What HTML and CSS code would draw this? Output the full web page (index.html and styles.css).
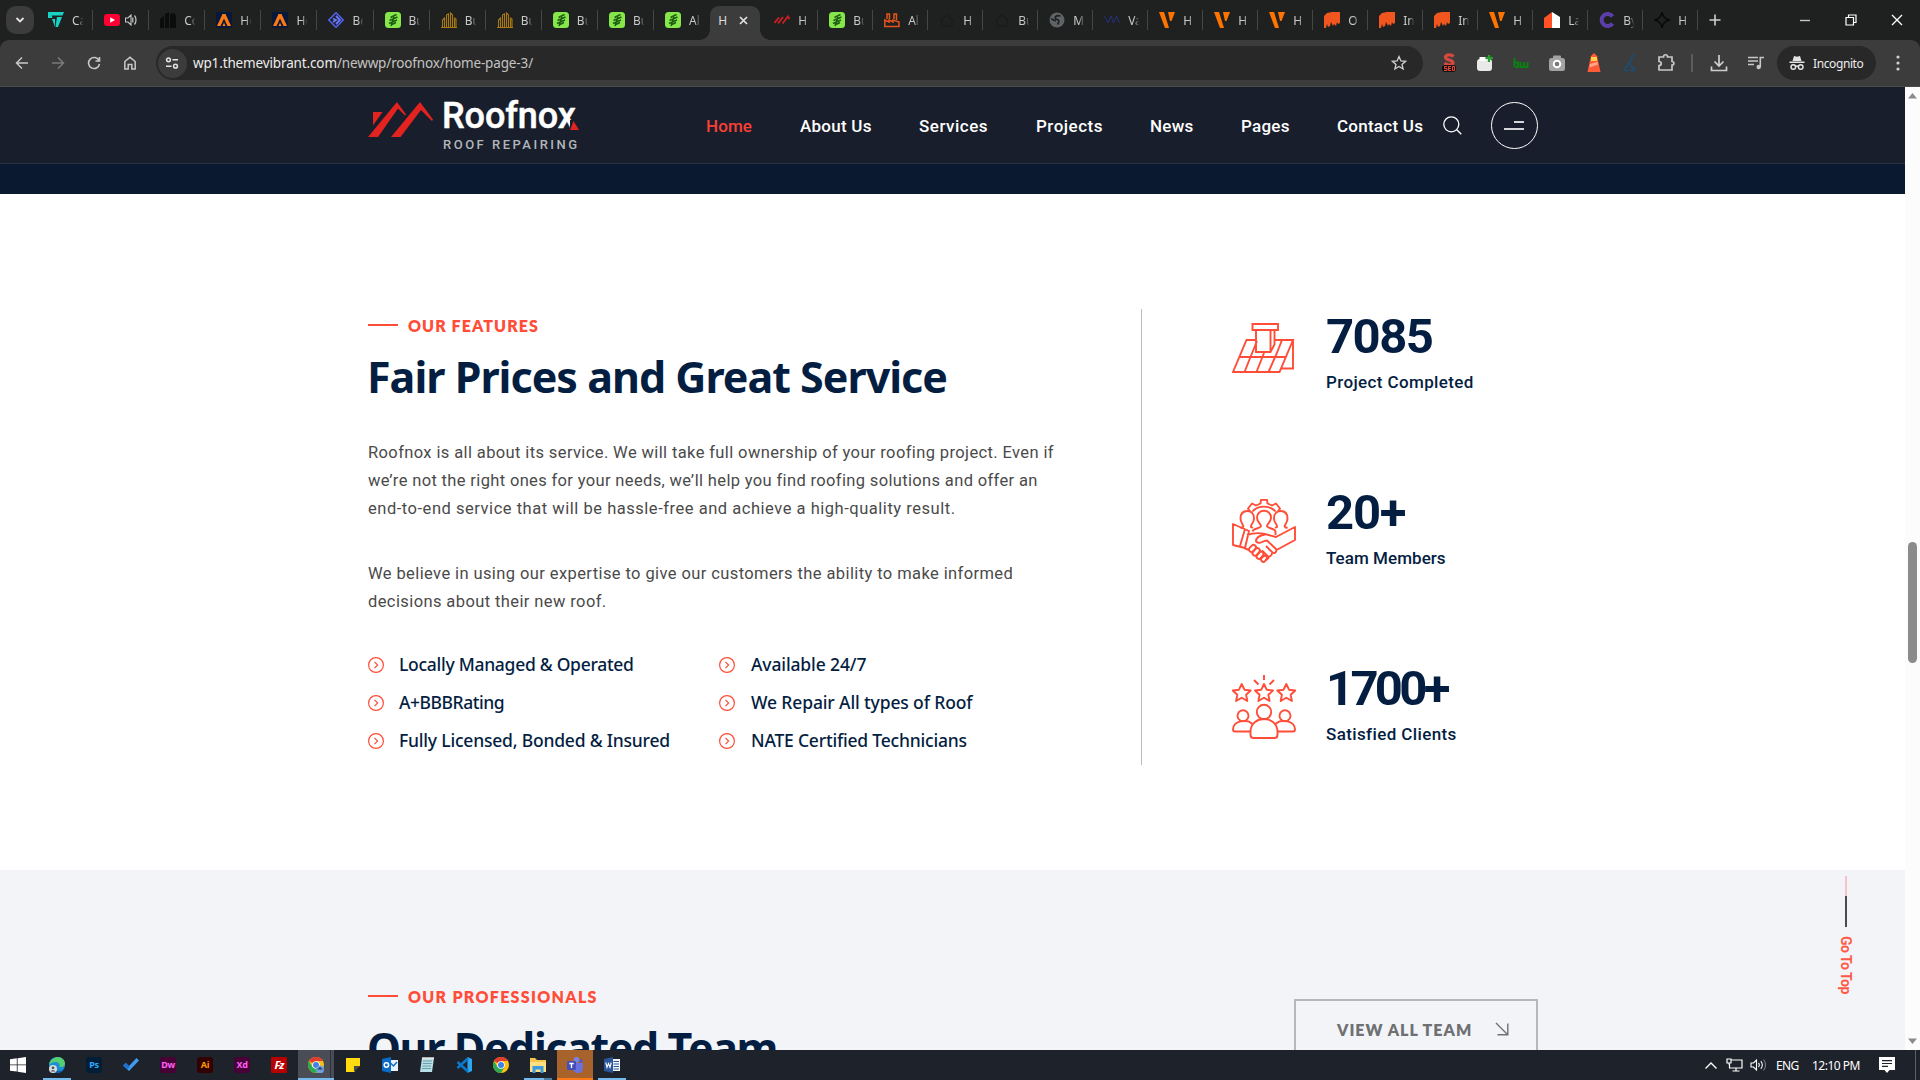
FILE: index.html
```html
<!DOCTYPE html>
<html lang="en">
<head>
<meta charset="utf-8">
<title>Roofnox – Home Page 3</title>
<link rel="stylesheet" href="styles.css">
</head>
<body>
<svg class="defs" width="0" height="0">
  <symbol id="f-teal" viewBox="0 0 16 16"><path d="M0 0h16l-1.500 3.500H3.500l1 2.500H0zM4 7h3v8zM9 5h5l-4 10H7.500z" fill="#16d3c5"/></symbol>
  <symbol id="f-yt" viewBox="0 0 16 16"><rect y="2" width="16" height="12" rx="3" fill="#ff0033"/><path d="M6.200 5.200v5.600L11 8z" fill="#fff"/></symbol>
  <symbol id="f-bld" viewBox="0 0 16 16"><path d="M0 16V7l4-3v12zM5 16V2l4-2v16zM10 16V2l4-1 2 3v12z" fill="#0b0c0c"/></symbol>
  <symbol id="f-a" viewBox="0 0 16 16"><rect width="16" height="16" fill="#07183a"/><path d="M1 14L6.500 2h3L15 14h-3.500L8 6.500 4.500 14zM6.500 14L8 10.500 9.500 14z" fill="#ff7a14"/></symbol>
  <symbol id="f-dia" viewBox="0 0 16 16"><path d="M8 .8L15.200 8 8 15.200.8 8z" fill="none" stroke="#4f62f5" stroke-width="1.600"/><path d="M8 4l4 4-4 4M5 6.500L8 8l-3 2" fill="none" stroke="#6b79ff" stroke-width="1.800"/></symbol>
  <symbol id="f-green" viewBox="0 0 16 16"><rect width="16" height="16" rx="3.500" fill="#86e64a"/><path d="M11.500 2.500L5.500 5.500M12.500 5L4.500 8.500M12 8L4 11.500M11 10.500L7 12.500M9 5l-3 9" fill="none" stroke="#1f5d14" stroke-width="1.500"/></symbol>
  <symbol id="f-gold" viewBox="0 0 16 16"><path d="M1.500 16V8l2-2v10M5.500 16V3l2-1v14M9.500 16V1l2 2v13M13.500 16V6l1.500 1v9M0 15.500h16" fill="none" stroke="#a97a12" stroke-width="1.100"/></symbol>
  <symbol id="f-roof" viewBox="0 0 16 16"><path d="M.5 11L5 5.500M4 11.500l5-6.500M8.500 11.500L14 4.500l1.500 2.500" fill="none" stroke="#c91f24" stroke-width="1.900"/></symbol>
  <symbol id="f-fac" viewBox="0 0 16 16"><path d="M.8 14.500V8L5 10V8l4 2V8l6 2v4.500zM3 7V2h2.500v5M10 7V2h2.500v6" fill="none" stroke="#e6531b" stroke-width="1.500"/></symbol>
  <symbol id="f-dark" viewBox="0 0 16 16"><path d="M1 9l7-6 7 6M3 8v6h10V8" fill="none" stroke="#1a1b1b" stroke-width="1.400"/></symbol>
  <symbol id="f-globe" viewBox="0 0 16 16"><circle cx="8" cy="8" r="7.500" fill="#5f6368"/><path d="M11.500 4C7 3 5 5 7 7c3 1 4 2 1.500 5.500M2 7c2 0 3 2 5 1.500" fill="none" stroke="#1f2120" stroke-width="1.700"/></symbol>
  <symbol id="f-va" viewBox="0 0 16 16"><path d="M.5 4L4 11l3-7 2.500 7 3-7L15.500 11" fill="none" stroke="#26307f" stroke-width="1"/></symbol>
  <symbol id="f-v" viewBox="0 0 16 16"><path d="M0 0h5l5 16H6zM9 0h7l-3.500 9H11z" fill="#ff7300"/></symbol>
  <symbol id="f-mat" viewBox="0 0 16 16"><path d="M0 16V4l3-3 5-1h8v11l-2 1-1-2-1 4-2-2-1 2-2-4-1 4-2 1-1-3-1 4z" fill="#f0561d"/></symbol>
  <symbol id="f-la" viewBox="0 0 16 16"><path d="M0 16V6l8-6v16z" fill="#ff5226"/><path d="M8 0l8 5v11H8z" fill="#fff"/></symbol>
  <symbol id="f-c" viewBox="0 0 16 16"><path d="M13.500 4.500A6 6 0 1 0 13.500 11.500" fill="none" stroke="#5b3fa8" stroke-width="4"/></symbol>
  <symbol id="f-star" viewBox="0 0 16 16"><path d="M8 .8c1.500 4.500 2.700 5.700 7.200 7.200-4.500 1.500-5.700 2.700-7.200 7.200C6.500 10.700 5.300 9.500.8 8 5.300 6.500 6.500 5.300 8 .8z" fill="none" stroke="#080808" stroke-width="1.500"/></symbol>
  <symbol id="check" viewBox="0 0 16 16"><circle cx="8" cy="8" r="7.400" fill="none" stroke="#ff4d38" stroke-width="1.200"/><path d="M6.500 4.800L9.600 8l-3.100 3.200" fill="none" stroke="#ff4d38" stroke-width="1.200"/></symbol>
  <symbol id="chromelogo" viewBox="0 0 16 16"><circle cx="8" cy="8" r="8" fill="#fbc116"/><path d="M8 8L1.070 4A8 8 0 0 1 14.930 4H8z" fill="#e33b2e"/><path d="M1.070 4A8 8 0 0 0 8 16l3.500-6L8 8 4.500 10z" fill="#2da94f"/><circle cx="8" cy="8" r="3.800" fill="#fff"/><circle cx="8" cy="8" r="3" fill="#3f80ea"/></symbol>
</svg>

<header class="tabstrip">
  <button class="tabsearch"><svg width="10" height="8" viewBox="0 0 10 8"><path d="M1.500 2L5 5.500 8.500 2" fill="none" stroke="#e3e3e3" stroke-width="1.800"/></svg></button>
  <div class="tabs tabs-left">
    <div class="tab"><svg><use href="#f-teal"/></svg><span>Ca</span></div>
    <div class="tab"><svg><use href="#f-yt"/></svg><svg class="sound" viewBox="0 0 12 12"><path d="M.5 4v4h2.500l3 3V1L3 4z" fill="none" stroke="#c8c8c8" stroke-width="1.100"/><path d="M7.800 3.500v5M9.500 1.500c2 2 2 7 0 9" fill="none" stroke="#c8c8c8" stroke-width="1.200"/></svg></div>
    <div class="tab"><svg><use href="#f-bld"/></svg><span>Co</span></div>
    <div class="tab"><svg><use href="#f-a"/></svg><span>Ho</span></div>
    <div class="tab"><svg><use href="#f-a"/></svg><span>Ho</span></div>
    <div class="tab"><svg><use href="#f-dia"/></svg><span>Be</span></div>
    <div class="tab"><svg><use href="#f-green"/></svg><span>Bu</span></div>
    <div class="tab"><svg><use href="#f-gold"/></svg><span>Bu</span></div>
    <div class="tab"><svg><use href="#f-gold"/></svg><span>Bu</span></div>
    <div class="tab"><svg><use href="#f-green"/></svg><span>Bu</span></div>
    <div class="tab"><svg><use href="#f-green"/></svg><span>Bu</span></div>
    <div class="tab last"><svg><use href="#f-green"/></svg><span>Al</span></div>
  </div>
  <div class="tab-active"><span>H</span><svg width="9" height="9" viewBox="0 0 9 9"><path d="M1 1l7 7M8 1L1 8" stroke="#e3e3e3" stroke-width="1.700"/></svg></div>
  <div class="tabs tabs-right">
    <div class="tab"><svg><use href="#f-roof"/></svg><span>H</span></div>
    <div class="tab"><svg><use href="#f-green"/></svg><span>Bu</span></div>
    <div class="tab"><svg><use href="#f-fac"/></svg><span>Al</span></div>
    <div class="tab"><svg><use href="#f-dark"/></svg><span>H</span></div>
    <div class="tab"><svg><use href="#f-dark"/></svg><span>Bu</span></div>
    <div class="tab"><svg><use href="#f-globe"/></svg><span>M</span></div>
    <div class="tab"><svg><use href="#f-va"/></svg><span>Va</span></div>
    <div class="tab"><svg><use href="#f-v"/></svg><span>H</span></div>
    <div class="tab"><svg><use href="#f-v"/></svg><span>H</span></div>
    <div class="tab"><svg><use href="#f-v"/></svg><span>H</span></div>
    <div class="tab"><svg><use href="#f-mat"/></svg><span>O</span></div>
    <div class="tab"><svg><use href="#f-mat"/></svg><span>In</span></div>
    <div class="tab"><svg><use href="#f-mat"/></svg><span>In</span></div>
    <div class="tab"><svg><use href="#f-v"/></svg><span>H</span></div>
    <div class="tab"><svg><use href="#f-la"/></svg><span>La</span></div>
    <div class="tab"><svg><use href="#f-c"/></svg><span>By</span></div>
    <div class="tab"><svg><use href="#f-star"/></svg><span>H</span></div>
  </div>
  <svg class="newtab" width="12" height="12" viewBox="0 0 12 12"><path d="M6 .5v11M.5 6h11" stroke="#d0d0d0" stroke-width="1.600"/></svg>
  <div class="wincontrols">
    <svg width="12" height="12" viewBox="0 0 12 12"><path d="M1 6.500h10" stroke="#c4c4c4" stroke-width="1.400"/></svg>
    <svg width="12" height="12" viewBox="0 0 12 12"><path d="M1 3.500h7.500V11H1zM3.500 3.500V1H11v7.500H8.500" fill="none" stroke="#fff" stroke-width="1.200"/></svg>
    <svg width="12" height="12" viewBox="0 0 12 12"><path d="M1 1l10 10M11 1L1 11" stroke="#fff" stroke-width="1.300"/></svg>
  </div>
</header>

<div class="toolbar-wrap">
<div class="toolbar">
  <div class="navbtns">
    <svg viewBox="0 0 14 14"><path d="M13 7H2M7 1.500L1.500 7 7 12.500" fill="none" stroke="#c7c7c7" stroke-width="1.500"/></svg>
    <svg viewBox="0 0 14 14"><path d="M1 7h11M7 1.500L12.500 7 7 12.500" fill="none" stroke="#7a7a7a" stroke-width="1.500"/></svg>
    <svg viewBox="0 0 14 14"><path d="M12 4.500A5.500 5.500 0 1 0 12.500 8M12.500 1v4H8.500" fill="none" stroke="#c7c7c7" stroke-width="1.600"/></svg>
    <svg viewBox="0 0 14 14"><path d="M1.800 13V5.500L7 1.300l5.200 4.200V13H8.800V8.500H5.200V13z" fill="none" stroke="#c7c7c7" stroke-width="1.500"/></svg>
  </div>
  <div class="omnibox">
    <span class="siteinfo"><svg width="14" height="14" viewBox="0 0 14 14"><g fill="none" stroke="#e3e3e3" stroke-width="1.500"><circle cx="3.500" cy="3.800" r="1.900"/><path d="M7.500 3.800H13M1 10.200h5.500"/><circle cx="10.500" cy="10.200" r="1.900"/></g></svg></span>
    <span class="url">wp1.themevibrant.com<i>/newwp/roofnox/home-page-3/</i></span>
    <svg class="star" width="16" height="16" viewBox="0 0 16 16"><path d="M8 1.500l1.900 4.400 4.700.4-3.600 3.100 1.100 4.600L8 11.500 3.900 14 5 9.400 1.400 6.300l4.700-.4z" fill="none" stroke="#d0d0d0" stroke-width="1.300"/></svg>
  </div>
  <div class="exts">
    <svg viewBox="0 0 20 20"><path d="M14.500 3.500C12 1 6 1.500 6.500 4.500c.4 2.800 7.500 2 7.500 5.500 0 2.500-5.500 3-8.500 0" fill="none" stroke="#d8493d" stroke-width="3.200"/><rect x="3" y="12" width="14" height="7" rx="3" fill="#16100f"/><path d="M8 13.500H5.500v2H8v2H5M12 13.500H9.500v4H12M9.500 15.500H12M13.500 13.500v4h2v-4z" fill="none" stroke="#e8493c" stroke-width="1"/></svg>
    <svg viewBox="0 0 20 20"><rect x="2" y="6" width="15" height="12" rx="3" fill="#e9e9e9"/><path d="M4.500 4h6v4h-6z" fill="#fff"/><path d="M14 2v7M11 5h7" stroke="#23a02a" stroke-width="2.200"/></svg>
    <svg viewBox="0 0 20 20"><path d="M3.500 5v9M4 9.500h3V14H4M9.500 9v5H13V9M13 14h3.500V9" fill="none" stroke="#0a7f12" stroke-width="2"/></svg>
    <svg viewBox="0 0 20 20"><rect x="2" y="5" width="16" height="13" rx="2.500" fill="#a3a3a3"/><rect x="6" y="2.500" width="8" height="5" rx="1" fill="#a3a3a3"/><circle cx="10" cy="11" r="3.300" fill="#777" stroke="#fff" stroke-width="2"/></svg>
    <svg viewBox="0 0 20 20"><path d="M10 0l4 4H6zM6.500 5h7l3 14h-13z" fill="#ff5b36"/><path d="M7 4h6v4H7z" fill="#ffd04a"/><path d="M6 11l7.500-2 .5 2.500-8.500 3z" fill="#ffa58c"/></svg>
    <svg viewBox="0 0 20 20"><path d="M14 1L6 15M9 9l4 7M4 14l1 4 4-1M10 17l4 1 1-4" fill="none" stroke="#1f4b6e" stroke-width="1.800"/></svg>
    <svg viewBox="0 0 20 20"><path d="M3 4h4.500c0-3 4-3 4 0H16v4.500c2.500 0 2.500 3.500 0 3.500v5H3v-4.500c3 0 3-4 0-4z" fill="none" stroke="#c7c7c7" stroke-width="1.700"/></svg>
  </div>
  <span class="vsep"></span>
  <svg class="dl" width="18" height="18" viewBox="0 0 18 18"><path d="M9 1v10.500M4.500 7.500L9 12l4.500-4.500M1.500 12.500v4h15v-4" fill="none" stroke="#d0d0d0" stroke-width="1.700"/></svg>
  <svg class="media" width="16" height="14" viewBox="0 0 16 14"><path d="M0 1.500h10M0 5h10M0 8.500h6" stroke="#c7c7c7" stroke-width="1.500"/><path d="M12.300 11V1.500H16" fill="none" stroke="#c7c7c7" stroke-width="1.600"/><circle cx="10.700" cy="11" r="2.200" fill="#c7c7c7"/></svg>
  <div class="incog"><svg width="16" height="16" viewBox="0 0 16 16"><path d="M3.500 6l1.500-5 3 .8L11 1l1.500 5zM.5 6.500h15v1.500H.5z" fill="#e3e3e3"/><g fill="none" stroke="#e3e3e3" stroke-width="1.500"><circle cx="4.300" cy="12" r="2.300"/><circle cx="11.700" cy="12" r="2.300"/><path d="M6.500 11.500q1.500-1 3 0"/></g></svg><span>Incognito</span></div>
  <svg class="kebab" width="4" height="16" viewBox="0 0 4 16"><g fill="#d0d0d0"><circle cx="2" cy="2" r="1.600"/><circle cx="2" cy="8" r="1.600"/><circle cx="2" cy="14" r="1.600"/></g></svg>
</div>
</div>

<div class="viewport">
  <div class="page">
    <header class="site-header">
      <a class="logo">
        <svg class="logo-mark" width="66" height="36" viewBox="0 0 66 36"><g fill="#e2231f"><path d="M0 35L29 0l9 12.500-1 1-7-7L10 35z"/><path d="M5 10h9.500L5 23.500z"/><path d="M23 35L52 0l13 17.500-1 1.500L53 8 32.500 35z"/></g></svg>
        <span class="logo-text"><b>Roofnox<svg width="9" height="10" viewBox="0 0 9 10"><path d="M0 0h9v10H0z" fill="#181e2b"/><path d="M3.500 1L9 10H0z" fill="#e2231f"/></svg></b><small>ROOF REPAIRING</small></span>
      </a>
      <nav class="menu">
        <a class="on">Home</a><a>About Us</a><a class="wide">Services</a><a class="wide">Projects</a><a>News</a><a>Pages</a><a>Contact Us</a>
      </nav>
      <svg class="search" width="19" height="19" viewBox="0 0 19 19"><circle cx="8.300" cy="8.300" r="7.500" fill="none" stroke="#fff" stroke-width="1.300"/><path d="M13.500 13.500l4.800 4.800" stroke="#fff" stroke-width="1.300"/></svg>
      <span class="burger"><i></i><i></i></span>
    </header>
    <div class="strip"></div>

    <section class="features">
      <div class="copy">
        <p class="eyebrow"><i></i>OUR FEATURES</p>
        <h2>Fair Prices and Great Service</h2>
        <p class="para"><span class="l1">Roofnox is all about its service. We will take full ownership of your roofing project. Even if</span><br><span class="l2">we’re not the right ones for your needs, we’ll help you find roofing solutions and offer an</span><br><span class="l3">end-to-end service that will be hassle-free and achieve a high-quality result.</span></p>
        <p class="para">We believe in using our expertise to give our customers the ability to make informed<br>decisions about their new roof.</p>
        <ul class="checks">
          <li><svg><use href="#check"/></svg><span class="t1">Locally Managed &amp; Operated</span></li>
          <li><svg><use href="#check"/></svg><span class="t2">Available 24/7</span></li>
          <li><svg><use href="#check"/></svg><span class="t3">A+BBBRating</span></li>
          <li><svg><use href="#check"/></svg><span class="t2">We Repair All types of Roof</span></li>
          <li><svg><use href="#check"/></svg><span class="t4">Fully Licensed, Bonded &amp; Insured</span></li>
          <li><svg><use href="#check"/></svg><span class="t4">NATE Certified Technicians</span></li>
        </ul>
      </div>
      <div class="stats">
        <div class="stat">
          <svg viewBox="0 0 64 64"><g fill="none" stroke="#ff4d38" stroke-width="1.900"><path d="M20.500 1H46v6H20.500zM24 7v22h14.500l4-7.500V7M38.500 7v22M24 17h-9.500L1 49h46.500L61 17H42.500M61 17v28.500H49.500M7.500 34H54M12.500 49l6-15 6.500-16M24.500 49l7.500-19M36.500 49l8-18 5.500-14"/></g></svg>
          <div><strong>7085</strong><em>Project Completed</em></div>
        </div>
        <div class="stat">
          <svg viewBox="0 0 64 64"><g fill="none" stroke="#ff4d38" stroke-width="1.900" stroke-linejoin="round"><path d="M18 12.500L16 9.500 20 4.500l4 2 4.500-2 .5-3.700h6l.5 3.700 4.500 2 4-2 4 5-2 3M20.500 12.500C26 6 38 6 43.500 12.500"/><path d="M29 27c0-2-4-3.500-4-8.500 0-9 14-9 14 0 0 5-4 6.500-4 8.500 1 3 8 2 8.500 5.500V36M29 27c-1 3-8 2-8.500 5.500"/><path d="M11.500 28c0-2.500-3-4-3-8.500 0-6 4-7.500 7-7.500s6.500 2 6.500 7.500c0 4.500-3.500 6-3 8.500l2 1M11.500 28l-3 1M52.500 28c0-2.500 3-4 3-8.500 0-6-4-7.500-7-7.500s-6.500 2-6.500 7.500c0 4.500 3.500 6 3 8.500l-2 1M52.500 28l3 1"/><path d="M1 25v21l12 3L17 32zM8 47l5-17M15 36c6-2 14-2 18-1l11 3 19-10v13L44.500 51M33 35.500c-6 1-9 4-9 7 4 4 6-1 11-1l9.500 9c0 3-2 4.500-4 3L34 47M40 54c0 3-2.500 4-4.500 3L30 51.500M37 57c0 2.500-2 4-4 3.500M12 49l5 2"/><rect x="16.500" y="47" width="8" height="4.800" rx="2.400" transform="rotate(-48 20.500 49.400)"/><rect x="20" y="50.500" width="8.500" height="4.800" rx="2.400" transform="rotate(-48 24.200 53)"/><rect x="24" y="54" width="8" height="4.600" rx="2.300" transform="rotate(-48 28 56.300)"/><rect x="29" y="57.500" width="6.500" height="4.500" rx="2.200" transform="rotate(-48 32.200 60)"/></g></svg>
          <div><strong class="n2">20+</strong><em class="e2">Team Members</em></div>
        </div>
        <div class="stat">
          <svg viewBox="0 0 64 64"><g fill="none" stroke="#ff4d38" stroke-width="1.900" stroke-linejoin="round"><path d="M32 0v5M22 5l4.500 4.500M42 5l-4.500 4.500"/><path id="st" d="M32 9l2.700 5.700 6.300.8-4.600 4.200L37.600 26 32 22.700 26.400 26l1.200-6.300-4.600-4.200 6.300-.8z"/><use href="#st" x="-22.300"/><use href="#st" x="22.300"/><circle cx="32" cy="37" r="7.200"/><path d="M18.500 59V56C19.500 40 44.500 40 45.500 56v4c0 2-1 3-3 3h-21c-2 0-3-1-3-3z"/><circle cx="11" cy="40.700" r="5.500"/><circle cx="53" cy="40.700" r="5.500"/><path d="M20.500 49C15 43.500 1 45.500 1 54.500c0 1.500.5 2 2 2h15.500M43.500 49C49 43.500 63 45.500 63 54.500c0 1.500-.5 2-2 2H45.500"/></g></svg>
          <div><strong class="n3">1700+</strong><em>Satisfied Clients</em></div>
        </div>
      </div>
    </section>

    <section class="team">
      <div>
        <p class="eyebrow pro"><i></i>OUR PROFESSIONALS</p>
        <h2>Our Dedicated Team</h2>
      </div>
      <a class="btn"><span>VIEW ALL TEAM</span><svg width="14" height="14" viewBox="0 0 14 14"><path d="M1 1l11.500 11.500M12.800 1.500v11.300H2.500" fill="none" stroke="#6e7073" stroke-width="1.400"/></svg></a>
    </section>
    <div class="gotop"><i></i><span>Go To Top</span></div>
  </div>
  <div class="scrollbar">
    <svg width="9" height="6" viewBox="0 0 9 6"><path d="M0 5.500L4.500 0 9 5.500z" fill="#8b8b8b"/></svg>
    <span class="thumb"></span>
    <svg class="down" width="9" height="6" viewBox="0 0 9 6"><path d="M0 .5L4.500 6 9 .5z" fill="#8b8b8b"/></svg>
  </div>
</div>

<footer class="taskbar">
  <div class="apps">
    <span class="app start"><svg viewBox="0 0 16 16"><path d="M0 2.300L6.800 1.300v6.200H0zM7.600 1.200L16 0v7.500H7.600zM0 8.300h6.800v6.300L0 13.700zM7.600 8.300H16V16l-8.400-1.200z" fill="#fff"/></svg></span>
    <span class="app run"><svg viewBox="0 0 16 16"><circle cx="8" cy="8" r="8" fill="#1a8fd8"/><path d="M0 8C1 2 6 0 9 0c4 0 7 3 7 6.500 0 3-3 4-5.500 3.500C12 5 5 3 0 8z" fill="#55cf72"/><path d="M5 9c0 5 5 6 9 4-3 4-9 3.500-11 1z" fill="#0b5cab"/><circle cx="4" cy="12" r="4" fill="#d9dde0"/><circle cx="4" cy="10.800" r="1.400" fill="#4e5358"/><path d="M1.500 14.500q2.500-3 5 0" fill="#4e5358"/></svg></span>
    <span class="app"><b class="ps">Ps</b></span>
    <span class="app"><svg viewBox="0 0 16 16"><path d="M0 8.500L2.800 6 6 9l7.500-8L16 3.500 6 14z" fill="#3f9cf0"/><path d="M0 8.500L2.800 6 7 10l-3 2.500z" fill="#1f6fd0"/></svg></span>
    <span class="app"><b class="dw">Dw</b></span>
    <span class="app"><b class="ai">Ai</b></span>
    <span class="app"><b class="xd">Xd</b></span>
    <span class="app"><b class="fz">Fz</b></span>
    <span class="app cur"><svg viewBox="0 0 16 16"><use href="#chromelogo"/><circle cx="12" cy="12.500" r="4" fill="#6fa1de"/><path d="M9.500 12h5M11 10.800h2" stroke="#233c66" stroke-width="1.200"/></svg></span>
    <span class="app"><svg viewBox="0 0 16 16"><path d="M1 1h14v8h-5v6H1z" fill="#ffdb0f"/><path d="M9 9h6l-6 6z" fill="#4b4a3f"/></svg></span>
    <span class="app"><svg viewBox="0 0 16 16"><rect x="7" y="3" width="9" height="11" fill="#e8f1fb"/><path d="M8.500 6l3 3L15 5" fill="none" stroke="#0f6cc7" stroke-width="1.500"/><path d="M0 2l9-2v16l-9-2z" fill="#0a6cc9"/><circle cx="4.400" cy="8" r="2.200" fill="none" stroke="#fff" stroke-width="1.500"/></svg></span>
    <span class="app"><svg viewBox="0 0 16 16"><path d="M3 1h12l-2 14H1z" fill="#b9dfe6"/><path d="M4 4h9M3.700 6.500h9M3.400 9H12M3 11.500h9" stroke="#5f97a5" stroke-width=".9"/><path d="M3 1.200h12" stroke="#e8e8e8" stroke-width="1.800"/></svg></span>
    <span class="app"><svg viewBox="0 0 16 16"><path d="M11.500 0L16 2v12l-4.500 2z" fill="#2aa6f2"/><path d="M12 1.500L1.500 11M12 14.500L1.500 5" stroke="#0b79c9" stroke-width="2.600"/></svg></span>
    <span class="app"><svg viewBox="0 0 16 16"><use href="#chromelogo"/></svg></span>
    <span class="app run2"><svg viewBox="0 0 16 16"><path d="M0 1h5l2 2h9v12H0z" fill="#f6c64c"/><path d="M0 5h16v10H0z" fill="#ffdf83"/><path d="M2.500 16V9h11v7h-3v-3.500h-5V16z" fill="#3c9ae0"/></svg></span>
    <span class="app teams"><svg viewBox="0 0 16 16"><circle cx="9.500" cy="2.800" r="2.800" fill="#7b83eb"/><circle cx="14" cy="4" r="1.800" fill="#5059c9"/><path d="M6 6h10v5c0 3-2 5-5 5s-5-2-5-5z" fill="#6a73dd"/><rect y="4" width="9" height="9" rx="1" fill="#464eb8"/><path d="M2.300 6.500h4.400M4.500 6.500v4.500" stroke="#fff" stroke-width="1.300"/></svg></span>
    <span class="app run"><svg viewBox="0 0 16 16"><rect x="8" y="2" width="8" height="12" fill="#f2f6fb"/><path d="M9.500 4.500H15M9.500 7H15M9.500 9.500H15M9.500 12H15" stroke="#2a5699" stroke-width="1.100"/><path d="M0 2l9-2v16l-9-2z" fill="#2a5699"/><path d="M1.800 5.500L3 10.500l1.500-4 1.500 4 1.200-5" fill="none" stroke="#fff" stroke-width="1.100"/></svg></span>
  </div>
  <div class="tray">
    <svg width="14" height="9" viewBox="0 0 14 9"><path d="M1.500 7.500L7 2l5.500 5.500" fill="none" stroke="#fff" stroke-width="1.400"/></svg>
    <svg class="net" width="17" height="14" viewBox="0 0 17 14"><path d="M5 2h11v8H3.500V6M10 10v3M6.500 13h7M1 1h4v4H1zM3 5v1.500" fill="none" stroke="#fff" stroke-width="1.200"/></svg>
    <svg class="vol" width="17" height="14" viewBox="0 0 17 14"><path d="M1 5v4h2.500L6.500 12V2L3.500 5z" fill="none" stroke="#fff" stroke-width="1.100"/><path d="M8.500 5c1 1 1 3 0 4M10.800 3.200c2 2 2 5.600 0 7.600" fill="none" stroke="#fff" stroke-width="1.100"/><path d="M13.500 1.500c2.700 3 2.700 8 0 11" fill="none" stroke="#777c85" stroke-width="1.100"/></svg>
    <span class="eng">ENG</span><span class="clock">12:10 PM</span>
    <svg class="note" width="16" height="16" viewBox="0 0 16 16"><path d="M0 0h16v13h-5.500L8 16l-2.500-3H0z" fill="#fff"/><path d="M3 3.700h10M3 6.500h10M3 9.300h6" stroke="#1e222b" stroke-width="1.200"/></svg>
  </div>
</footer>
</body>
</html>
```
FILE: styles.css
```css
* { box-sizing: border-box; }
body { margin: 0; width: 1920px; height: 1080px; overflow: hidden; display: flex; flex-direction: column; font-family: Roboto, sans-serif; background: #fff; }
p, h2, ul { margin: 0; padding: 0; }
svg { display: block; flex: none; }
.defs { position: absolute; }

/* browser chrome */
.tabstrip { flex: none; height: 40px; display: flex; align-items: center; background: #1f2120; padding-left: 6px; font: 12px "Noto Sans", sans-serif; color: #c9cac9; }
.tabsearch { width: 28px; height: 28px; margin: 0 3px 0 0; padding: 0; border: 0; border-radius: 10px; background: #3c3c3c; display: flex; align-items: center; justify-content: center; }
.tabs { display: grid; grid-auto-flow: column; }
.tabs-left { grid-auto-columns: 56.100px; }
.tabs-right { grid-auto-columns: 55px; margin-left: 3px; }
.tab { height: 20px; display: flex; align-items: center; padding-left: 11px; border-right: 1.500px solid #454746; }
.tab.last { border-color: transparent; }
.tab svg { width: 16px; height: 16px; }
.tab .sound { width: 12px; height: 12px; margin-left: 5px; }
.tab span { margin-left: 8px; width: 12px; overflow: hidden; white-space: nowrap; -webkit-mask-image: linear-gradient(90deg, #000 50%, transparent 95%); }
.tab-active { align-self: flex-end; position: relative; width: 50px; height: 34px; border-radius: 9px 9px 0 0; background: #3c3c3c; display: flex; align-items: center; padding: 0 0 6px 8px; color: #dcdcdc; }
.tab-active svg { margin-left: 12px; }
.tab-active::before, .tab-active::after { content: ""; position: absolute; bottom: 0; width: 10px; height: 10px; }
.tab-active::before { left: -10px; background: radial-gradient(circle at 0 0, transparent 9.500px, #3c3c3c 10px); }
.tab-active::after { right: -10px; background: radial-gradient(circle at 100% 0, transparent 9.500px, #3c3c3c 10px); }
.newtab { margin-left: 11px; }
.wincontrols { display: flex; gap: 34px; margin-left: auto; padding-right: 17px; }

.toolbar-wrap { flex: none; height: 47px; background: #1f2120; }
.toolbar { height: 47px; display: flex; align-items: center; background: #3c3c3c; border-bottom: 1px solid #4a4a4a; border-radius: 9px 9px 0 0; padding: 0 20px 0 15px; }
.navbtns { display: flex; gap: 22px; width: 141px; }
.navbtns svg { width: 14px; height: 14px; }
.omnibox { width: 1267px; height: 34px; border-radius: 17px; background: #282828; display: flex; align-items: center; padding: 0 16px 0 2px; }
.siteinfo { width: 29px; height: 29px; border-radius: 50%; background: #3c3c3c; display: flex; align-items: center; justify-content: center; }
.url { margin-left: 6px; font: 13.500px "Noto Sans", sans-serif; letter-spacing: -.14px; color: #ececec; }
.url i { font-style: normal; color: #c3c3c3; }
.star { margin-left: auto; }
.exts { display: flex; gap: 16.200px; margin-left: 16px; }
.exts svg { width: 20px; height: 20px; }
.vsep { width: 2px; height: 18px; background: #5c5c5c; margin-left: 15px; }
.dl { margin-left: 17px; }
.media { margin-left: 20px; }
.incog { margin-left: 13px; width: 99px; height: 34px; border-radius: 17px; background: #282828; display: flex; align-items: center; padding-left: 12px; gap: 8px; font: 12px "Noto Sans", sans-serif; letter-spacing: -.4px; color: #ececec; }
.kebab { margin-left: 20px; }

.viewport { flex: none; height: 963px; display: flex; }
.page { position: relative; width: 1905px; height: 963px; overflow: hidden; display: flex; flex-direction: column; }
.scrollbar { width: 15px; background: #fcfcfc; display: flex; flex-direction: column; align-items: center; padding: 6px 0; }
.thumb { width: 9px; height: 121px; border-radius: 5px; background: #8b8b8b; margin-top: 443px; }
.down { margin-top: auto; }

/* site header */
.site-header { flex: none; height: 77px; display: flex; align-items: center; background: #181e2b; border-bottom: 1px solid #2b323f; padding-left: 368px; }
.logo { display: flex; width: 338px; height: 76px; }
.logo-mark { margin: 15px 0 0 0; }
.logo-text { margin: 9px 0 0 8px; display: flex; flex-direction: column; color: #fff; }
.logo-text b { position: relative; font-size: 36px; font-weight: 500; line-height: 40px; letter-spacing: -.1px; -webkit-text-stroke: .5px #fff; }
.logo-text b svg { position: absolute; left: 128px; bottom: 6px; }
.logo-text small { font-size: 13px; font-weight: 500; line-height: 18px; letter-spacing: 2.500px; color: #b2b5ba; padding-left: 1px; }
.menu { display: grid; grid-template-columns: 94px 119px 117px 114px 91px 96px 107px; width: 738px; padding-top: 1px; font-size: 17px; font-weight: 500; letter-spacing: .25px; color: #fff; white-space: nowrap; }
.menu .on { color: #fb3f36; letter-spacing: .1px; }
.menu .wide { letter-spacing: .5px; }
.search { margin-left: -1px; }
.burger { margin-left: 29px; width: 47px; height: 47px; border: 1px solid #fff; border-radius: 50%; display: flex; flex-direction: column; align-items: flex-end; justify-content: center; gap: 5px; padding-right: 13px; }
.burger i { width: 20px; height: 2px; background: #d4d6d9; }
.burger i:first-child { width: 10px; }
.strip { flex: none; height: 30px; background: #0a192f; }

/* features */
.features { flex: none; height: 676px; padding: 115px 0 0 368px; display: flex; align-items: flex-start; color: #041e42; }
.copy { width: 773px; height: 456px; }
.eyebrow { height: 32px; display: flex; align-items: center; font: 800 16px/31px Lato, sans-serif; letter-spacing: 1.080px; color: #ff4d38; }
.eyebrow i { width: 30px; height: 2px; background: #ff4d38; margin-right: 10px; }
.eyebrow.pro { letter-spacing: 1.290px; }
h2 { margin: 8px 0 0 -1px; font: 700 43px/56px "Noto Sans", sans-serif; letter-spacing: -.99px; color: #041e42; white-space: nowrap; }
.para { margin-top: 34px; font-size: 16.500px; line-height: 28px; letter-spacing: .4px; color: #4a4a4a; white-space: nowrap; }
.para + .para { margin-top: 37px; }
.l1 { letter-spacing: .381px; }
.l2 { letter-spacing: .35px; }
.l3 { letter-spacing: .527px; }
.checks { list-style: none; margin-top: 29px; display: grid; grid-template-columns: 351px 351px; grid-auto-rows: 38px; font: 500 17.500px "Noto Sans", sans-serif; }
.checks li { display: flex; align-items: center; gap: 15px; }
.checks li:nth-child(even) { gap: 16px; }
.checks svg { width: 16px; height: 16px; margin-top: 1px; }
.t1 { letter-spacing: -.28px; }
.t2 { letter-spacing: -.13px; }
.t3 { letter-spacing: -.45px; }
.t4 { letter-spacing: -.2px; }
.stats { height: 456px; border-left: 1px solid #bbb; padding-left: 90px; }
.stat { height: 176px; display: flex; }
.stat svg { width: 64px; height: 64px; margin-top: 14px; }
.stat div { margin-left: 30px; padding-top: 3px; display: flex; flex-direction: column; }
.stat strong { font-size: 49px; line-height: 50px; letter-spacing: -1.500px; }
.stat .n2 { letter-spacing: -1.200px; }
.stat .n3 { letter-spacing: -3.700px; }
.stat em { margin-top: 6px; font-style: normal; font-weight: 500; font-size: 17px; line-height: 28px; letter-spacing: .38px; }
.stat .e2 { letter-spacing: .05px; }

/* team */
.team { flex: 1; background: #f3f4f8; padding: 110px 367px 0 368px; display: flex; justify-content: space-between; align-items: flex-start; }
.team h2 { letter-spacing: -1.400px; }
.btn { width: 244px; height: 62px; margin-top: 19px; border: 2px solid #b5b7b9; display: flex; align-items: center; padding-left: 41px; font: 800 16px Lato, sans-serif; letter-spacing: 1px; color: #6e7073; white-space: nowrap; }
.btn span { padding-bottom: 2px; }
.btn svg { margin: 0 0 2px 23px; }
.gotop { position: absolute; left: 1837px; top: 789px; width: 17px; display: flex; flex-direction: column; align-items: center; }
.gotop i { width: 2px; height: 51px; background: linear-gradient(#f7c0cb 20px, #4a4b50 20px); }
.gotop span { margin-top: 9px; writing-mode: vertical-rl; font-size: 14px; line-height: 17px; font-weight: 700; letter-spacing: -.5px; color: #ff5a47; white-space: nowrap; }

/* taskbar */
.taskbar { flex: none; height: 30px; background: #1e222b; display: flex; justify-content: space-between; color: #fff; }
.apps { display: flex; gap: 1px; }
.app { width: 36px; height: 30px; display: flex; align-items: center; justify-content: center; }
.app.start { width: 38px; padding-right: 2px; }
.app svg { width: 16px; height: 16px; }
.app b { width: 16px; height: 16px; border-radius: 3px; font: 700 9px/16px "Noto Sans", sans-serif; text-align: center; letter-spacing: -.3px; }
.app .ps { background: #001e36; color: #31a8ff; }
.app .dw { background: #470137; color: #ff61f6; }
.app .ai { background: #330000; color: #ff9a00; }
.app .xd { background: #470137; color: #ff61f6; }
.app .fz { background: #b90000; color: #fff; border-radius: 1px; font-style: italic; font-size: 11px; letter-spacing: -1px; }
.run { background: linear-gradient(#76b9ed 0 0) 50% 100% / 28px 2px no-repeat; }
.run2 { background: linear-gradient(90deg, #76b9ed 20px, #4f7ea5 20px) 50% 100% / 28px 2px no-repeat; }
.cur { background: linear-gradient(#76b9ed 0 0) 0 100% / 100% 2px no-repeat, linear-gradient(90deg, #4a4d55 32px, #2c3038 32px, #2c3038 33px, #4a4d55 33px); }
.teams { background: linear-gradient(#ff7a14 0 0) 0 100% / 100% 2px no-repeat, #a8632c; }
.tray { display: flex; align-items: center; font: 12px "Noto Sans", sans-serif; padding-right: 4px; margin-right: 4px; border-right: 1px solid #5b5f68; }
.net { margin-left: 8px; }
.vol { margin-left: 7px; }
.eng { margin-left: 9px; width: 36px; letter-spacing: -.6px; }
.clock { width: 67px; letter-spacing: -.5px; }
.note { margin-right: 16px; }
```
